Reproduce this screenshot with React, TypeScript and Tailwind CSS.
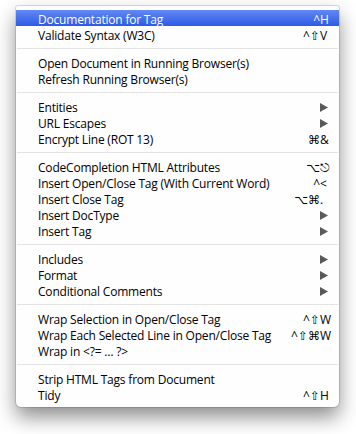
import React from "react";

type Item = { label: string; mods?: string; key?: string; sub?: boolean; hl?: boolean };

const sections: Item[][] = [
  [
    { label: "Documentation for Tag", mods: "^", key: "H", hl: true },
    { label: "Validate Syntax (W3C)", mods: "^⇧", key: "V" },
  ],
  [{ label: "Open Document in Running Browser(s)" }, { label: "Refresh Running Browser(s)" }],
  [
    { label: "Entities", sub: true },
    { label: "URL Escapes", sub: true },
    { label: "Encrypt Line (ROT 13)", mods: "⌘", key: "&" },
  ],
  [
    { label: "CodeCompletion HTML Attributes", mods: "⌥", key: "⎋" },
    { label: "Insert Open/Close Tag (With Current Word)", mods: "^", key: "<" },
    { label: "Insert Close Tag", mods: "⌥⌘", key: "." },
    { label: "Insert DocType", sub: true },
    { label: "Insert Tag", sub: true },
  ],
  [
    { label: "Includes", sub: true },
    { label: "Format", sub: true },
    { label: "Conditional Comments", sub: true },
  ],
  [
    { label: "Wrap Selection in Open/Close Tag", mods: "^⇧", key: "W" },
    { label: "Wrap Each Selected Line in Open/Close Tag", mods: "^⇧⌘", key: "W" },
    { label: "Wrap in <?= … ?>" },
  ],
  [{ label: "Strip HTML Tags from Document" }, { label: "Tidy", mods: "^⇧", key: "H" }],
];

function Arrow() {
  return (
    <svg width="8" height="9" viewBox="0 0 8 9" className="block">
      <polygon points="0,0 8,4.5 0,9" fill="#5a5a5a" />
    </svg>
  );
}

function Row({ item }: { item: Item }) {
  const base = item.hl
    ? "bg-[linear-gradient(to_bottom,#6389f1,#2c5ae8)] text-white"
    : "text-black";
  return (
    <div className={`flex h-[16px] items-center pl-[22px] pr-[10px] ${base}`}>
      <span className="flex-1 whitespace-nowrap leading-[16px] pt-[3px] tracking-[-0.2px]">
        {item.label}
      </span>
      {item.sub && (
        <span className="mr-[1px] pt-[2px]">
          <Arrow />
        </span>
      )}
      {item.key && (
        <span className="flex items-center leading-[16px] pt-[3px]">
          <span className="text-right">{item.mods}</span>
          <span className="w-[9px] text-left">{item.key}</span>
        </span>
      )}
    </div>
  );
}

export default function App() {
  return (
    <div
      className="w-[356px] h-[434px] bg-white pt-[6px] pl-[16px]"
      style={{ fontFamily: '"Open Sans", "DejaVu Sans", sans-serif' }}
    >
      <div className="w-[323px] bg-[#fefefe] pt-[4px] pb-[5px] text-[12px] rounded-t-[2px] rounded-b-[5px] shadow-[0_10px_20px_rgba(0,0,0,0.45),0_0_0_1px_rgba(0,0,0,0.12)]">
        {sections.map((sec, i) => (
          <div key={i}>
            {i > 0 && (
              <div className="flex h-[12px] items-center px-[1px]">
                <div className="h-px w-full bg-[#e3e3e3]" />
              </div>
            )}
            {sec.map((it, j) => (
              <Row key={j} item={it} />
            ))}
          </div>
        ))}
      </div>
    </div>
  );
}
